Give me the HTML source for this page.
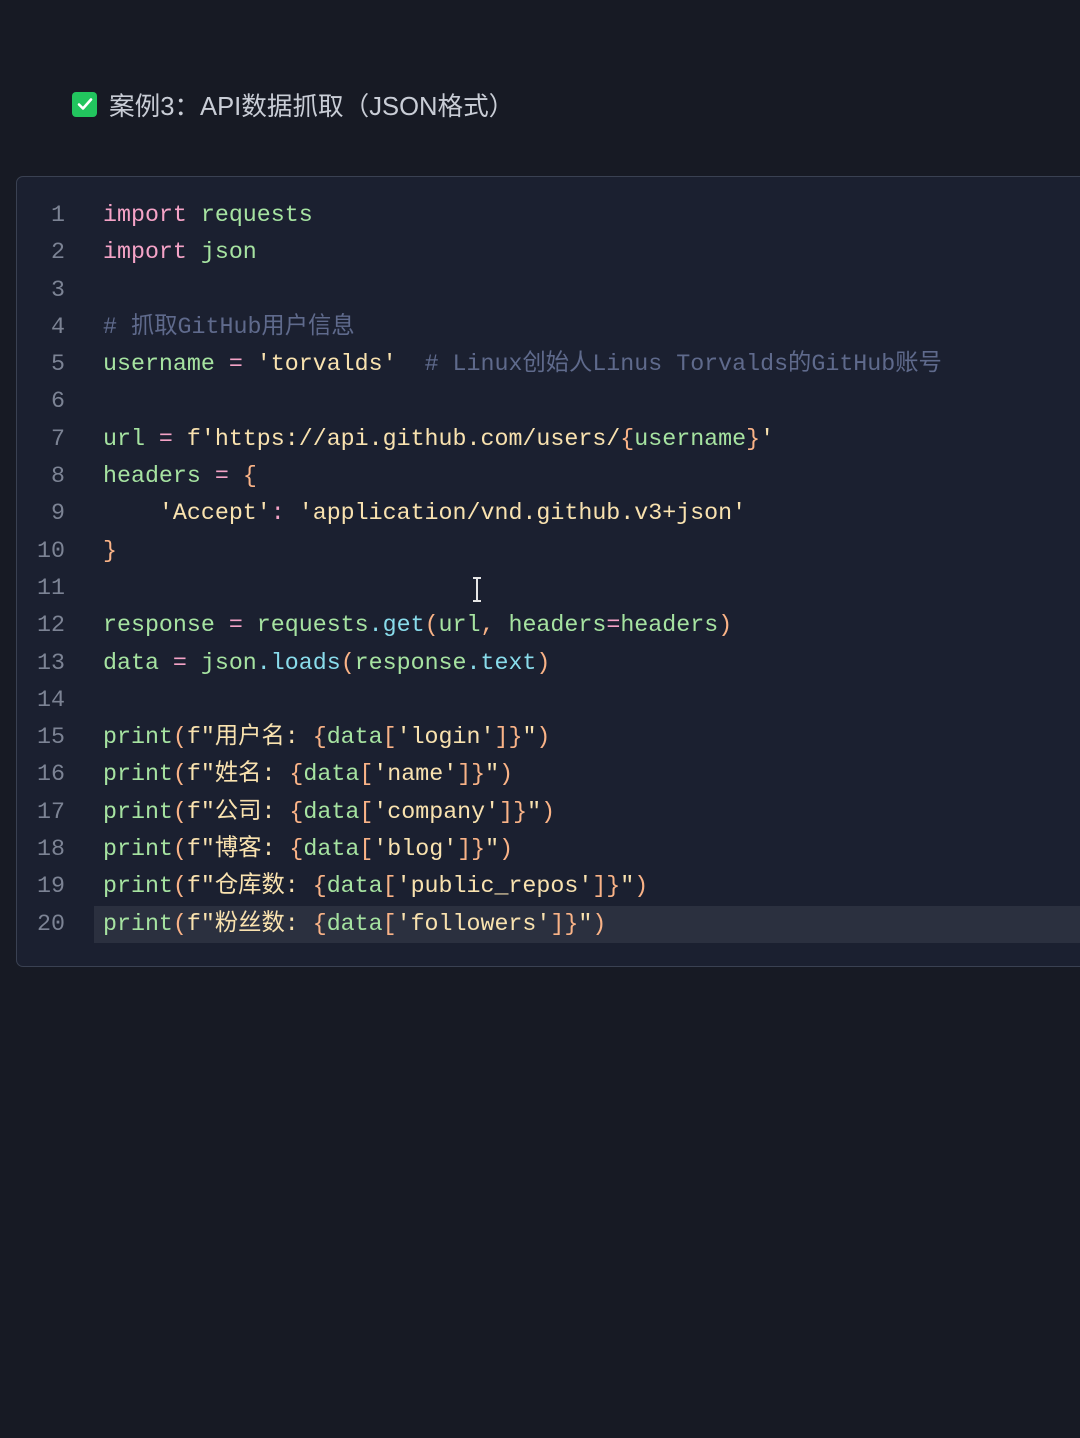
<!DOCTYPE html>
<html><head><meta charset="utf-8"><style>
html,body{margin:0;padding:0;}
body{width:1080px;height:1438px;background:#171a24;position:relative;overflow:hidden;font-family:"Liberation Sans","Noto Sans CJK SC",sans-serif;}
.title{position:absolute;left:72px;top:86px;height:36px;display:flex;align-items:center;color:#c9cdd6;font-size:25.6px;}
.cb{width:25px;height:25px;background:#22c55e;border-radius:4px;margin-right:12px;display:flex;align-items:center;justify-content:center;}
.box{position:absolute;left:16px;top:176px;width:1080px;height:791px;background:#1b2030;border:1.5px solid #3a4152;border-radius:7px;box-sizing:border-box;}
.code{position:absolute;left:0;top:197px;width:1080px;font-family:"Liberation Mono","Noto Sans CJK SC",monospace;font-size:23.3px;}
.ln{height:37.3px;line-height:37.3px;position:relative;white-space:pre;}
.n{position:absolute;left:0;width:65px;text-align:right;color:#7c8394;}
.t{position:absolute;left:103px;color:#a6e3a1;}
.hl{position:absolute;left:94px;right:0;top:0;bottom:0;background:#2b303f;}
.k{color:#f5a3c7}.g{color:#a6e3a1}.s{color:#f9e2af}.c{color:#5f6a8c}.b{color:#89dceb}.o{color:#fab387}.p{color:#f5a3c7}
.cur{position:absolute;left:471px;top:577px;width:12px;height:25px;}
</style></head><body>
<div class="title"><div class="cb"><svg width="18" height="18" viewBox="0 0 18 18"><path d="M3 9.5l4 4 8-9" stroke="#fff" stroke-width="2.6" fill="none" stroke-linecap="round" stroke-linejoin="round"/></svg></div>案例3：API数据抓取（JSON格式）</div>
<div class="box"></div>
<div class="code">
<div class="ln"><span class="n">1</span><span class="t"><span class="k">import</span> requests</span></div>
<div class="ln"><span class="n">2</span><span class="t"><span class="k">import</span> json</span></div>
<div class="ln"><span class="n">3</span></div>
<div class="ln"><span class="n">4</span><span class="t c"># 抓取GitHub用户信息</span></div>
<div class="ln"><span class="n">5</span><span class="t">username <span class="p">=</span> <span class="s">'torvalds'</span>  <span class="c"># Linux创始人Linus Torvalds的GitHub账号</span></span></div>
<div class="ln"><span class="n">6</span></div>
<div class="ln"><span class="n">7</span><span class="t">url <span class="p">=</span> <span class="s">f'https://api.github.com/users/<span class="o">{</span><span class="g">username</span><span class="o">}</span>'</span></span></div>
<div class="ln"><span class="n">8</span><span class="t">headers <span class="p">=</span> <span class="o">{</span></span></div>
<div class="ln"><span class="n">9</span><span class="t">    <span class="s">'Accept'</span><span class="p">:</span> <span class="s">'application/vnd.github.v3+json'</span></span></div>
<div class="ln"><span class="n">10</span><span class="t"><span class="o">}</span></span></div>
<div class="ln"><span class="n">11</span></div>
<div class="ln"><span class="n">12</span><span class="t">response <span class="p">=</span> requests<span class="b">.get</span><span class="o">(</span>url<span class="o">,</span> headers<span class="p">=</span>headers<span class="o">)</span></span></div>
<div class="ln"><span class="n">13</span><span class="t">data <span class="p">=</span> json<span class="b">.loads</span><span class="o">(</span>response<span class="b">.text</span><span class="o">)</span></span></div>
<div class="ln"><span class="n">14</span></div>
<div class="ln"><span class="n">15</span><span class="t">print<span class="o">(</span><span class="s">f"用户名: <span class="o">{</span><span class="g">data</span><span class="o">[</span>'login'<span class="o">]}</span>"</span><span class="o">)</span></span></div>
<div class="ln"><span class="n">16</span><span class="t">print<span class="o">(</span><span class="s">f"姓名: <span class="o">{</span><span class="g">data</span><span class="o">[</span>'name'<span class="o">]}</span>"</span><span class="o">)</span></span></div>
<div class="ln"><span class="n">17</span><span class="t">print<span class="o">(</span><span class="s">f"公司: <span class="o">{</span><span class="g">data</span><span class="o">[</span>'company'<span class="o">]}</span>"</span><span class="o">)</span></span></div>
<div class="ln"><span class="n">18</span><span class="t">print<span class="o">(</span><span class="s">f"博客: <span class="o">{</span><span class="g">data</span><span class="o">[</span>'blog'<span class="o">]}</span>"</span><span class="o">)</span></span></div>
<div class="ln"><span class="n">19</span><span class="t">print<span class="o">(</span><span class="s">f"仓库数: <span class="o">{</span><span class="g">data</span><span class="o">[</span>'public_repos'<span class="o">]}</span>"</span><span class="o">)</span></span></div>
<div class="ln"><span class="hl"></span><span class="n">20</span><span class="t">print<span class="o">(</span><span class="s">f"粉丝数: <span class="o">{</span><span class="g">data</span><span class="o">[</span>'followers'<span class="o">]}</span>"</span><span class="o">)</span></span></div>
</div>
<svg class="cur" viewBox="0 0 12 25"><path d="M2 1h8M6 1v23M2 24h8" stroke="#e6e6e6" stroke-width="2" fill="none"/></svg>
</body></html>
